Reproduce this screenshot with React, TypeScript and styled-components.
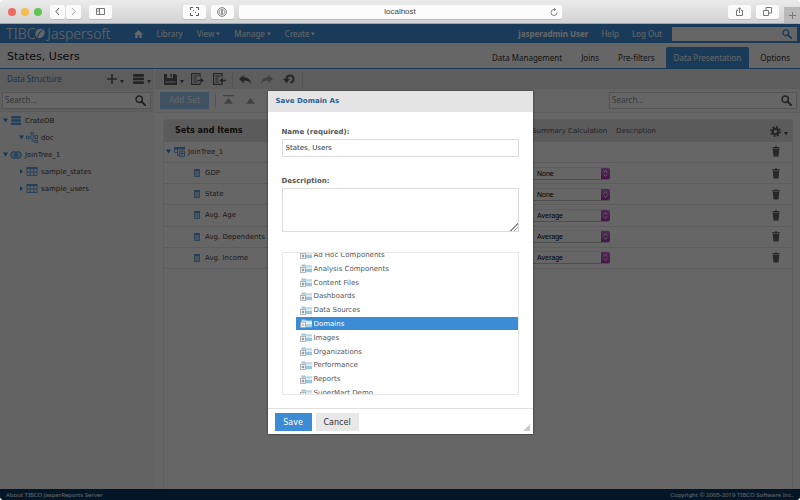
import React from 'react';
import styled, { createGlobalStyle, css } from 'styled-components';

const VERDANA = '"DejaVu Sans", Verdana, sans-serif';
const HUMANIST = '"Noto Sans", "Open Sans", sans-serif';
const ARIAL = '"Liberation Sans", Arial, sans-serif';
const BLUE = '#3c8cd5';
const HEADER = '#3f93df';

const Global = createGlobalStyle`
  * { box-sizing: border-box; }
  html, body { margin: 0; }
  body { background: #fff; font: 7px/14px ${VERDANA}; color: #333; }
  button, input, textarea, select { font: inherit; color: inherit; margin: 0; }
  button { border: 0; padding: 0; background: none; }
  a { color: inherit; text-decoration: none; }
  svg { display: block; flex: none; }
  ul { list-style: none; margin: 0; padding: 0; }
`;

const Window = styled.div`
  min-height: 100vh;
  display: flex;
  flex-direction: column;
  overflow: hidden;
  border-radius: 4px;
`;

/* Browser chrome */
const Chrome = styled.header`
  flex: none;
  height: 24px;
  display: grid;
  grid-template-columns: 1fr minmax(0, 323px) 1fr;
  align-items: center;
  background: linear-gradient(#ebebeb, #d2d2d2);
  border-bottom: 1px solid #a5a5a5;
`;
const ChromeSide = styled.div<{ $end?: boolean }>`
  height: 23px;
  display: flex;
  align-items: center;
  justify-content: ${(p) => (p.$end ? 'flex-end' : 'flex-start')};
  gap: 5px;
  padding-left: ${(p) => (p.$end ? 0 : 8)}px;
`;
const Light = styled.span<{ $color: string }>`
  width: 8px;
  height: 8px;
  border-radius: 50%;
  background: ${(p) => p.$color};
`;
const ChromeGroup = styled.div`
  display: flex;
  gap: 1px;
  margin-left: 3px;
`;
const ChromeButton = styled.button<{ $wide?: boolean }>`
  width: ${(p) => (p.$wide ? 23 : 15)}px;
  height: 14px;
  display: grid;
  place-items: center;
  border-radius: 2px;
  background: #fbfbfb;
  box-shadow: 0 1px 0 #bdbdbd;
`;
const Spacer = styled.span`
  flex: 1;
`;
const AddressBar = styled.div`
  height: 14px;
  display: flex;
  align-items: center;
  border-radius: 2px;
  background: #fcfcfc;
  box-shadow: 0 1px 0 #bdbdbd;
  padding: 0 4px 0 12px;
`;
const AddressInput = styled.input`
  flex: 1;
  min-width: 0;
  border: 0;
  padding: 0;
  background: none;
  text-align: center;
  font: 8px/12px ${ARIAL};
  color: #444;
`;
const NewTab = styled.button`
  align-self: flex-end;
  width: 16px;
  height: 16px;
  display: grid;
  place-items: center;
  background: #b9b9b9;
`;

/* Application */
const Page = styled.div`
  flex: 1;
  position: relative;
  display: flex;
  flex-direction: column;
`;
const Banner = styled.div`
  height: 19px;
  display: flex;
  align-items: center;
  padding: 0 3px 0 6px;
  background: ${HEADER};
  color: #fff;
  font: 8px/14px ${HUMANIST};
`;
const Logo = styled.a`
  display: flex;
  align-items: center;
  font: 300 14px/18px ${HUMANIST};
  margin-right: 23px;
`;
const LogoWord = styled.span`
  margin-left: 2px;
`;
const Menu = styled.nav`
  flex: 1;
  display: flex;
  align-items: center;
  gap: 14px;
`;
const MenuItem = styled.a`
  display: flex;
  align-items: center;
  gap: 2px;
`;
const Account = styled.div`
  display: flex;
  align-items: center;
  gap: 13px;
  margin-right: 10px;
`;
const SearchBox = styled.label<{ $width?: string; $header?: boolean }>`
  width: ${(p) => p.$width ?? '100%'};
  height: ${(p) => (p.$header ? 14 : 17)}px;
  display: flex;
  align-items: center;
  padding: 0 4px 0 2px;
  background: #fff;
  border: 1px solid ${(p) => (p.$header ? '#fff' : '#d2d2d2')};
  color: ${(p) => (p.$header ? HEADER : '#555')};
`;
const SearchInput = styled.input`
  flex: 1;
  min-width: 0;
  border: 0;
  padding: 0;
  background: none;
  font: 8px/12px ${HUMANIST};
  &::placeholder { color: #8c8c8c; opacity: 1; }
`;

const TitleBar = styled.div`
  height: 26px;
  display: flex;
  justify-content: space-between;
  align-items: flex-end;
  padding: 0 2px 0 7px;
  border-bottom: 1px solid ${HEADER};
`;
const Title = styled.h1`
  margin: 0;
  font: 11px/22px ${VERDANA};
  color: #222;
`;
const Tabs = styled.nav`
  display: flex;
  gap: 3px;
`;
const Tab = styled.a<{ $active?: boolean }>`
  padding: 0 8px;
  font: 8px/21px ${HUMANIST};
  border-radius: 2px 2px 0 0;
  ${(p) => p.$active && css`
    background: ${HEADER};
    color: #fff;
  `}
`;

const Workspace = styled.div`
  flex: 1;
  display: grid;
  grid-template-columns: 155px minmax(0, 1fr);
`;
const Sidebar = styled.aside`
  background: #f7f7f7;
  border-right: 1px solid #fff;
`;
const Main = styled.main`
  display: flex;
  flex-direction: column;
`;
const Toolbar = styled.div<{ $main?: boolean }>`
  height: 20px;
  display: flex;
  align-items: center;
  background: #e8e8e8;
  color: #5c5c5c;
  padding: 0 3px 0 ${(p) => (p.$main ? 9 : 7)}px;
`;
const PanelTitle = styled.h2`
  flex: 1;
  margin: 0;
  font: 8px/16px ${HUMANIST};
  color: #3a86cc;
`;
const Tool = styled.button<{ $faded?: boolean; $menu?: boolean }>`
  min-width: ${(p) => (p.$menu ? 27 : 22)}px;
  height: 14px;
  display: flex;
  align-items: center;
  gap: 3px;
  color: ${(p) => (p.$faded ? '#a6a6a6' : 'inherit')};
`;
const SideTool = styled(Tool)`
  min-width: 18px;
  margin-left: 8px;
`;
const Divider = styled.span<{ $roomy?: boolean }>`
  width: 1px;
  height: 15px;
  margin: ${(p) => (p.$roomy ? '0 7px 0 6px' : '0 6px 0 -3px')};
  background: #cfcfcf;
`;
const FilterRow = styled.div<{ $main?: boolean }>`
  height: ${(p) => (p.$main ? 24 : 23)}px;
  display: flex;
  align-items: center;
  padding: ${(p) => (p.$main ? '0 3px 1px 5px' : '0 3px 0 2px')};
  background: ${(p) => (p.$main ? '#fbfbfb' : '#ededed')};
  border-bottom: 1px solid ${(p) => (p.$main ? '#ececec' : '#e4e4e4')};
`;
const AddSet = styled.button`
  width: 49px;
  height: 17px;
  background: #9dccf7;
  color: #fff;
  font: 8px/17px ${VERDANA};
`;

const Tree = styled.ul`
  color: #444;
`;
const TreeRow = styled.li<{ $depth?: number }>`
  height: 17px;
  display: flex;
  align-items: center;
  gap: 2px;
  padding-left: ${(p) => 3 + (p.$depth ?? 0) * 16}px;
  svg:nth-child(2) { width: 12px; margin-right: 1px; }
`;

const Panel = styled.div`
  flex: 1;
  margin: 6px 7px 0 8px;
  border: 1px solid #ececec;
  border-bottom: 0;
  border-radius: 3px 3px 0 0;
  overflow: hidden;
`;
const Table = styled.table`
  width: 100%;
  height: 149px;
  table-layout: fixed;
  border-collapse: collapse;
  color: #444;
  th, td { padding: 0; text-align: left; font-weight: 400; }
  thead tr { height: 22px; background: #e3e3e3; color: #555; }
  tbody tr { border-bottom: 1px solid #e6e6e6; }
`;
const NameColumn = styled.col``;
const SizedColumn = styled.col<{ $w: number }>`
  width: ${(p) => p.$w}px;
`;
const SetsHeading = styled.span`
  padding-left: 11px;
  font: bold 8px/14px ${VERDANA};
  color: #222;
`;
const ItemName = styled.div<{ $child?: boolean }>`
  display: flex;
  align-items: center;
  gap: ${(p) => (p.$child ? 5 : 3)}px;
  padding-left: ${(p) => (p.$child ? 30 : 2)}px;
`;
const GearButton = styled.button`
  display: flex;
  align-items: center;
  gap: 3px;
  padding-left: 8px;
`;
const TrashButton = styled.button`
  display: block;
  padding-left: 10px;
`;
const SelectBox = styled.span`
  display: flex;
  width: 78px;
  height: 11px;
  border-radius: 2px;
  overflow: hidden;
  background: #fff;
  box-shadow: 0 1px 0 #c4c4c4, 0 -1px 0 #ececec;
`;
const Select = styled.select`
  flex: 1;
  min-width: 0;
  appearance: none;
  border: 0;
  padding: 0 0 0 5px;
  background: none;
  font: 7px/11px ${ARIAL};
  color: #000;
`;
const Stepper = styled.span`
  width: 9px;
  display: grid;
  place-items: center;
  background: linear-gradient(#c86fd3, #ab35b5);
`;

const Footer = styled.footer`
  height: 11px;
  display: flex;
  justify-content: space-between;
  align-items: center;
  padding: 0 7px 0 6px;
  background: #073763;
  color: #fff;
  font: 6px/10px ${HUMANIST};
`;

/* Dialog */
const Backdrop = styled.div`
  position: absolute;
  inset: 0;
  display: flex;
  align-items: center;
  justify-content: center;
  background: rgba(0, 0, 0, 0.6);
`;
const Dialog = styled.form`
  width: 265px;
  max-width: 100%;
  background: #fff;
  box-shadow: 0 0 2px rgba(0, 0, 0, 0.6);
`;
const DialogTitle = styled.h2`
  margin: 0;
  padding: 0 8px;
  background: #e4e4e4;
  font: bold 7px/21px ${VERDANA};
  color: #2b6196;
`;
const DialogBody = styled.div`
  display: flex;
  flex-direction: column;
  padding: 13px 14px 13px;
`;
const Label = styled.label`
  font: bold 7px/14px ${VERDANA};
  color: #555;
`;
const fieldFrame = css`
  border: 1px solid #dcdcdc;
  border-radius: 0;
  background: #fff;
`;
const NameInput = styled.input`
  ${fieldFrame}
  height: 18px;
  padding: 0 3px;
  margin-bottom: 17px;
`;
const DescriptionInput = styled.textarea`
  ${fieldFrame}
  height: 44px;
  padding: 2px 3px;
  margin-bottom: 20px;
  resize: vertical;
  &::-webkit-resizer {
    background: linear-gradient(135deg, transparent 72%, #888 72%, #888 77%, transparent 77%, transparent 85%, #888 85%, #888 90%, transparent 90%);
  }
`;
const FolderPane = styled.div`
  ${fieldFrame}
  height: 143px;
  border-color: #e8e8e8;
  overflow: hidden;
  display: flex;
  align-items: flex-start;
`;
const FolderList = styled.ul`
  flex: 1 0 auto;
  height: 152px;
  margin-top: -5px;
  display: grid;
  grid-auto-rows: 1fr;
  padding-left: 13px;
  color: #555;
  line-height: 12px;
`;
const Folder = styled.li<{ $selected?: boolean }>`
  display: flex;
  align-items: center;
  gap: 2px;
  padding: 1px 0 0 4px;
  ${(p) => p.$selected && css`
    background: ${BLUE};
    color: #fff;
  `}
`;
const DialogFooter = styled.div`
  display: flex;
  align-items: center;
  gap: 4px;
  height: 26px;
  padding: 1px 3px 0 7px;
  border-top: 1px solid #e0e0e0;
`;
const DialogButton = styled.button<{ $primary?: boolean }>`
  padding: 1px 8px 0;
  font: 8px/17px ${VERDANA};
  min-width: 37px;
  background: ${(p) => (p.$primary ? BLUE : '#e8e8e8')};
  color: ${(p) => (p.$primary ? '#fff' : '#333')};
`;
const Grip = styled.svg`
  margin-left: auto;
  align-self: flex-end;
  margin-bottom: 3px;
`;

/* Icons */
const Caret = () => (
  <svg width="4" height="4" viewBox="0 0 4 4" fill="currentColor"><path d="M0 .6h4L2 3.4z" /></svg>
);
const LowCaret = () => (
  <svg width="4" height="9" viewBox="0 0 4 9" fill="currentColor"><path d="M0 5h4L2 8.4z" /></svg>
);
const Twisty = ({ open }: { open?: boolean }) => (
  <svg width="5" height="5" viewBox="0 0 5 5" fill="#2f86d6"><path d={open ? 'M0 .6h5L2.5 4.4z' : 'M1 0v5l3-2.5z'} /></svg>
);
const SearchIcon = ({ size = 11 }: { size?: number }) => (
  <svg width={size} height={size} viewBox="0 0 11 11" fill="none" stroke="currentColor">
    <circle cx="4.2" cy="4.2" r="3.2" strokeWidth="1.5" />
    <path d="M6.6 6.6l3.5 3.5" strokeWidth="2" strokeLinecap="round" />
  </svg>
);
const HomeIcon = () => (
  <svg width="9" height="8" viewBox="0 0 9 8" fill="currentColor"><path d="M4.5 0L9 4.2H7.7V8H5.4V5.2H3.6V8H1.3V4.2H0z" /></svg>
);
const LogoMark = () => (
  <svg width="10" height="11" viewBox="0 0 10 11" fill="currentColor">
    <path d="M8 1C5 0 .8 1.200.4 5.200.2 7.400 1 8.800 1.800 9.400 2.500 6.300 4.800 3 8 1z" />
    <path d="M8.900 1.600C10.400 4 9.600 8 6.600 9.500 4.900 10.300 3.300 10.300 2.500 10 3.600 6.800 5.800 3.800 8.900 1.600z" />
  </svg>
);
const DatabaseIcon = ({ color = 'currentColor', size = 11 }: { color?: string; size?: number }) => (
  <svg width={size} height={size - 1} viewBox="0 0 11 10" fill={color}>
    <rect width="11" height="2.700" rx=".8" /><rect y="3.600" width="11" height="2.700" rx=".8" /><rect y="7.200" width="11" height="2.700" rx=".8" />
  </svg>
);
const SaveIcon = () => (
  <svg width="13" height="11" viewBox="0 0 13 11" fill="currentColor">
    <path fillRule="evenodd" d="M0 0h3v4h6V0h2.500L13 1.500V11H0zM1.500 7.500v1h10v-1zM6.500 0H8v3H6.500z" />
  </svg>
);
const ReportIcon = ({ into }: { into?: boolean }) => (
  <svg width="13" height="12" viewBox="0 0 13 12" fill="none" stroke="currentColor" strokeWidth="1.200">
    <path d="M9 4V.6H.6v10.800H9V10" />
    <path d="M2.300 3h5M2.300 5h3.500M2.300 7h3M2.300 9h4" strokeWidth="1" />
    <path d={into ? 'M13 6.700H10V4.600L6.500 7.500 10 10.400V8.300h3z' : 'M6.200 6.700H9.400V4.600L12.900 7.500 9.400 10.400V8.300H6.200z'} fill="currentColor" stroke="none" />
  </svg>
);
const ArrowIcon = ({ flip }: { flip?: boolean }) => (
  <svg width="12" height="9" viewBox="0 0 12 9" fill="currentColor">
    <path d="M4.800 0v2.300C9 2.300 11.600 4.500 12 9 10.300 6.300 8.300 5.800 4.800 5.800V8.200L0 4z" transform={flip ? 'matrix(-1 0 0 1 12 0)' : undefined} />
  </svg>
);
const RevertIcon = () => (
  <svg width="12" height="10" viewBox="0 0 12 10" fill="none">
    <path d="M3.500 5.200C3.500.2 10.500.4 10.500 5c0 2-1.200 3.300-3 3.800" stroke="currentColor" strokeWidth="2" />
    <path d="M0 4.800h7L3.600 9.200z" fill="currentColor" />
  </svg>
);
const MoveIcon = ({ top }: { top?: boolean }) => (
  <svg width="11" height="10" viewBox="0 0 11 10" fill="currentColor">
    {top && <rect width="11" height="1.300" />}
    <path d="M5.500 3L10 8.800H1z" />
  </svg>
);
const SchemaIcon = () => (
  <svg width="12" height="11" viewBox="0 0 12 11" fill="none" stroke="#559fe4" strokeWidth=".9">
    <rect x=".5" y="4.300" width="2.400" height="2.400" /><rect x="5" y=".5" width="2.400" height="2.400" /><circle cx="6.200" cy="5.500" r="1.700" />
    <rect x="9.100" y="3.500" width="2.400" height="3" /><rect x="9.100" y="8.100" width="2.400" height="2.400" /><path d="M3 5.500h1.300M6.200 7.300v2h3" />
  </svg>
);
const JoinIcon = () => (
  <svg width="12" height="8" viewBox="0 0 12 8" fill="#559fe4" fillOpacity=".45" stroke="#559fe4">
    <circle cx="4" cy="4" r="3.400" /><circle cx="8" cy="4" r="3.400" />
  </svg>
);
const GridIcon = () => (
  <svg width="11" height="9" viewBox="0 0 11 9" fill="none" stroke="#559fe4">
    <path d="M.5 1v7.500h10V1M.5 5h10M3.800 2v6.500M7.200 2v6.500" strokeWidth=".9" /><path d="M0 1h11" strokeWidth="2" />
  </svg>
);
const SetIcon = () => (
  <svg width="11" height="10" viewBox="0 0 11 10" fill="none" stroke="#559fe4">
    <path d="M0 1.200h11" strokeWidth="2.400" /><path d="M.5 1v4.500H3M3.500 2v6.500H6M5.500 4h5v5.500h-5zM5.500 6.500h5M8 4v5" strokeWidth=".9" />
  </svg>
);
const FieldIcon = () => (
  <svg width="6" height="8" viewBox="0 0 6 8" fill="#b9d3ea" stroke="#559fe4"><rect x=".5" y=".5" width="5" height="7" strokeWidth=".8" /><path d="M0 1h6" strokeWidth="2" /></svg>
);
const GearIcon = () => (
  <svg width="11" height="11" viewBox="0 0 11 11" fill="none" stroke="#555">
    <circle cx="5.500" cy="5.500" r="2.800" strokeWidth="2" />
    <circle cx="5.500" cy="5.500" r="4.600" strokeWidth="1.700" strokeDasharray="1.800 1.812" />
  </svg>
);
const TrashIcon = () => (
  <svg width="8" height="11" viewBox="0 0 8 11" fill="#666">
    <path d="M.2 1.300L3 .9 3.300.2h1.400L5 .9l2.800.4v1.200H.2zM.7 3.100h6.600L6.500 10.500h-5z" />
  </svg>
);
const StepperIcon = () => (
  <svg width="5" height="7" viewBox="0 0 5 7" fill="none" stroke="#fff"><path d="M.7 2.500L2.500.8l1.800 1.700M.7 4.500l1.800 1.700 1.800-1.700" /></svg>
);
const FolderIcon = ({ open }: { open?: boolean }) => (
  <svg width="12" height="9" viewBox="0 0 12 9" fill="none">
    <path d="M1.500 2V.4h3.700l.8 1.200H12V8.300H1.500z" fill={open ? '#a9d0ee' : '#9cc6dc'} />
    <path d="M1.500 2.500H12V5H1.500z" fill={open ? '#e6f2fb' : '#dcebf2'} />
    <rect x=".5" y="3.500" width="5" height="5" fill="#fff" stroke="#a4a4a4" strokeWidth=".8" />
    <path d={open ? 'M1.500 6h3' : 'M1.500 6h3M3 4.500v3'} stroke="#666" strokeWidth=".8" />
  </svg>
);
const Line = ({ d, color = '#555' }: { d: string; color?: string }) => (
  <svg width="9" height="9" viewBox="0 0 9 9" fill="none" stroke={color}><path d={d} /></svg>
);

const FOLDERS = ['Ad Hoc Components', 'Analysis Components', 'Content Files', 'Dashboards', 'Data Sources', 'Domains', 'Images', 'Organizations', 'Performance', 'Reports', 'SuperMart Demo'];
const FIELDS = [['GDP', 'None'], ['State', 'None'], ['Avg. Age', 'Average'], ['Avg. Dependents', 'Average'], ['Avg. Income', 'Average']];
const TABS = ['Data Management', 'Joins', 'Pre-filters', 'Data Presentation', 'Options'];

export default function App() {
  return (
    <Window>
      <Global />
      <Chrome>
        <ChromeSide>
          <Light $color="#ee6a5f" /><Light $color="#f5bd4f" /><Light $color="#61c454" />
          <ChromeGroup>
            <ChromeButton aria-label="Back"><Line d="M6 1L3 4.500 6 8" /></ChromeButton>
            <ChromeButton aria-label="Forward"><Line d="M3 1l3 3.500L3 8" color="#aaa" /></ChromeButton>
          </ChromeGroup>
          <ChromeGroup>
            <ChromeButton $wide aria-label="Sidebar"><Line d="M.5 1.500h8v6h-8zM3.500 1.500v6M1.500 3h1M1.500 4.500h1" color="#777" /></ChromeButton>
          </ChromeGroup>
          <Spacer />
          <ChromeButton $wide aria-label="Fit"><Line d="M.5 3V.5H3M6 .5h2.500V3M.5 6v2.500H3M8.500 6v2.500H6M3 3l1 1M6 6L5 5" /></ChromeButton>
          <ChromeButton $wide aria-label="Password manager">
            <svg width="10" height="10" viewBox="0 0 10 10" fill="none" stroke="#777"><circle cx="5" cy="5" r="4.300" /><circle cx="5" cy="5" r="2.700" strokeWidth=".6" /><path d="M5 3v4" strokeWidth="1.500" /></svg>
          </ChromeButton>
          <span />
        </ChromeSide>
        <AddressBar>
          <AddressInput aria-label="Address" defaultValue="localhost" />
          <svg width="8" height="8" viewBox="0 0 8 8" fill="none" stroke="#666" strokeWidth=".8"><path d="M7 4.500A3 3 0 1 1 4 1.500h1M4 0l1.600 1.500L4 3" /></svg>
        </AddressBar>
        <ChromeSide $end>
          <ChromeButton $wide aria-label="Share"><Line d="M3 3.500H1.500v5h6v-5H6M4.500 6V.8M2.700 2.500L4.500.7l1.800 1.800" color="#777" /></ChromeButton>
          <ChromeButton $wide aria-label="Tabs"><Line d="M.5 3.500h5v5h-5zM3 3.500v-3h5.500V6h-3" color="#777" /></ChromeButton>
          <NewTab aria-label="New tab"><Line d="M4.500 1v7M1 4.500h7" color="#777" /></NewTab>
        </ChromeSide>
      </Chrome>

      <Page>
        <Banner>
          <Logo href="#" aria-label="TIBCO Jaspersoft">TIBC<LogoMark /><LogoWord>Jaspersoft</LogoWord></Logo>
          <Menu>
            <MenuItem href="#" aria-label="Home"><HomeIcon /></MenuItem>
            <MenuItem href="#">Library</MenuItem>
            {['View', 'Manage', 'Create'].map((m) => <MenuItem href="#" key={m}>{m}<Caret /></MenuItem>)}
          </Menu>
          <Account><b>jasperadmin User</b><a href="#">Help</a><a href="#">Log Out</a></Account>
          <SearchBox $header $width="125px"><SearchInput aria-label="Search repository" /><SearchIcon size={10} /></SearchBox>
        </Banner>
        <TitleBar>
          <Title>States, Users</Title>
          <Tabs>{TABS.map((t) => <Tab href="#" key={t} $active={t === 'Data Presentation'}>{t}</Tab>)}</Tabs>
        </TitleBar>

        <Workspace>
          <Sidebar>
            <Toolbar>
              <PanelTitle>Data Structure</PanelTitle>
              <SideTool aria-label="Add">
                <svg width="10" height="10" viewBox="0 0 10 10" stroke="currentColor" strokeWidth="1.600"><path d="M5 0v10M0 5h10" /></svg><LowCaret />
              </SideTool>
              <SideTool aria-label="Data sources"><DatabaseIcon /><LowCaret /></SideTool>
            </Toolbar>
            <FilterRow>
              <SearchBox><SearchInput aria-label="Search structure" placeholder="Search..." /><SearchIcon /></SearchBox>
            </FilterRow>
            <Tree>
              <TreeRow><Twisty open /><DatabaseIcon color="#559fe4" size={10} />CrateDB</TreeRow>
              <TreeRow $depth={1}><Twisty open /><SchemaIcon />doc</TreeRow>
              <TreeRow><Twisty open /><JoinIcon />JoinTree_1</TreeRow>
              <TreeRow $depth={1}><Twisty /><GridIcon />sample_states</TreeRow>
              <TreeRow $depth={1}><Twisty /><GridIcon />sample_users</TreeRow>
            </Tree>
          </Sidebar>
          <Main>
            <Toolbar $main>
              <Tool $menu aria-label="Save"><SaveIcon /><LowCaret /></Tool>
              <Tool aria-label="Export"><ReportIcon /></Tool>
              <Tool aria-label="Import"><ReportIcon into /></Tool>
              <Divider />
              <Tool aria-label="Undo"><ArrowIcon /></Tool>
              <Tool aria-label="Redo" $faded><ArrowIcon flip /></Tool>
              <Tool aria-label="Revert"><RevertIcon /></Tool>
              <Divider />
            </Toolbar>
            <FilterRow $main>
              <AddSet>Add Set</AddSet>
              <Divider $roomy />
              <Tool $faded aria-label="Move to top"><MoveIcon top /></Tool>
              <Tool $faded aria-label="Move up"><MoveIcon /></Tool>
              <Spacer />
              <SearchBox $width="188px"><SearchInput aria-label="Search sets" placeholder="Search..." /><SearchIcon /></SearchBox>
            </FilterRow>
            <Panel>
              <Table>
                <colgroup><NameColumn /><SizedColumn $w={84} /><SizedColumn $w={146} /><SizedColumn $w={30} /></colgroup>
                <thead>
                  <tr>
                    <th><SetsHeading>Sets and Items</SetsHeading></th><th>Summary Calculation</th><th>Description</th>
                    <th><GearButton aria-label="Columns"><GearIcon /><LowCaret /></GearButton></th>
                  </tr>
                </thead>
                <tbody>
                  <tr>
                    <td><ItemName><Twisty open /><SetIcon />JoinTree_1</ItemName></td><td /><td />
                    <td><TrashButton aria-label="Delete set"><TrashIcon /></TrashButton></td>
                  </tr>
                  {FIELDS.map(([name, calc]) => (
                    <tr key={name}>
                      <td><ItemName $child><FieldIcon />{name}</ItemName></td>
                      <td>
                        <SelectBox>
                          <Select aria-label={`Summary for ${name}`} defaultValue={calc}><option>None</option><option>Average</option></Select>
                          <Stepper><StepperIcon /></Stepper>
                        </SelectBox>
                      </td>
                      <td />
                      <td><TrashButton aria-label={`Delete ${name}`}><TrashIcon /></TrashButton></td>
                    </tr>
                  ))}
                </tbody>
              </Table>
            </Panel>
          </Main>
        </Workspace>

        <Footer><a href="#">About TIBCO JasperReports Server</a><span>Copyright © 2005-2019 TIBCO Software Inc.</span></Footer>

        <Backdrop>
          <Dialog role="dialog" aria-labelledby="dialog-title" onSubmit={(e) => e.preventDefault()}>
            <DialogTitle id="dialog-title">Save Domain As</DialogTitle>
            <DialogBody>
              <Label htmlFor="name">Name (required):</Label>
              <NameInput id="name" defaultValue="States, Users" />
              <Label htmlFor="description">Description:</Label>
              <DescriptionInput id="description" />
              <FolderPane>
                <FolderList>
                  {FOLDERS.map((f) => (
                    <Folder key={f} $selected={f === 'Domains'}><FolderIcon open={f === 'Domains'} />{f}</Folder>
                  ))}
                </FolderList>
              </FolderPane>
            </DialogBody>
            <DialogFooter>
              <DialogButton type="submit" $primary>Save</DialogButton>
              <DialogButton type="button">Cancel</DialogButton>
              <Grip width="7" height="7" viewBox="0 0 7 7" fill="#ccc"><path d="M7 0v7H0z" /></Grip>
            </DialogFooter>
          </Dialog>
        </Backdrop>
      </Page>
    </Window>
  );
}
